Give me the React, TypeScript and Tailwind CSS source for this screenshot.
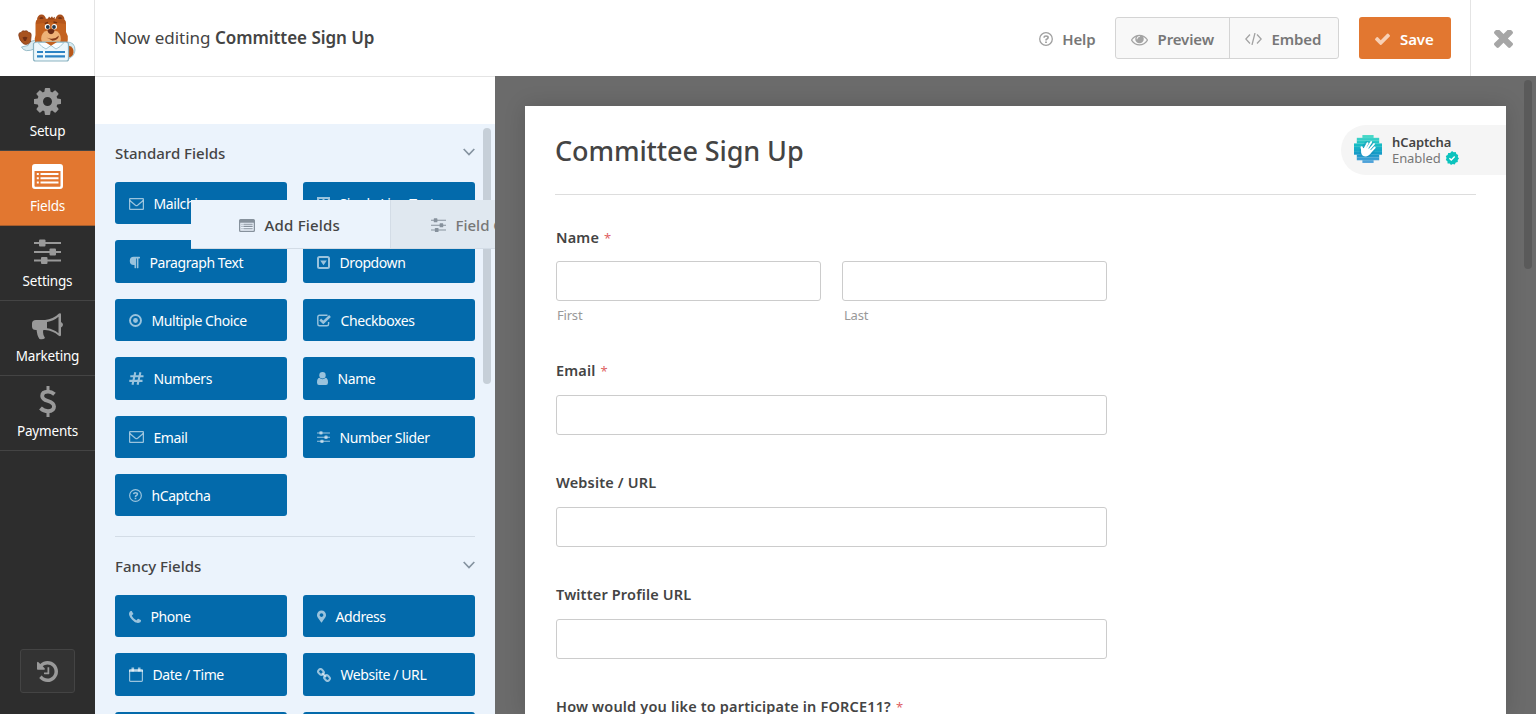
import React from "react";
import { FaParagraph, FaMapMarkerAlt } from "react-icons/fa";

const P = {
  history:
    "M1536 896q0 156-61 298t-164 245-245 164-298 61q-172 0-327-72.5t-264-204.5q-7-10-6.5-22.5t8.5-20.5l137-138q10-9 25-9 16 2 23 12 73 95 179 147t225 52q104 0 198.5-40.5t163.5-109.5 109.5-163.5 40.5-198.5-40.5-198.5-109.5-163.5-163.5-109.5-198.5-40.5q-98 0-188 35.5t-160 101.5l137 138q31 30 14 69-17 40-59 40h-448q-26 0-45-19t-19-45v-448q0-42 40-59 39-17 69 14l130 129q107-101 244.5-156.5t284.5-55.5q156 0 298 61t245 164 164 245 61 298zm-640-288v448q0 14-9 23t-23 9h-320q-14 0-23-9t-9-23v-64q0-14 9-23t23-9h224v-352q0-14 9-23t23-9h64q14 0 23 9t9 23z",
  eye: "M1664 960q-152-236-381-353 61 104 61 225 0 185-131.5 316.5t-316.5 131.5-316.5-131.5-131.5-316.5q0-121 61-225-229 117-381 353 133 205 333.500 326.500t434.500 121.500 434.500-121.500 333.500-326.500zm-720-384q0-20-14-34t-34-14q-125 0-214.500 89.500t-89.500 214.500q0 20 14 34t34 14 34-14 14-34q0-86 61-147t147-61q20 0 34-14t14-34zm848 384q0 34-20 69-140 230-376.500 368.500t-499.500 138.500-499.500-139-376.500-368q-20-35-20-69t20-69q140-229 376.500-368t499.500-139 499.500 139 376.500 368q20 35 20 69z",
  times:
    "M1490 1322q0 40-28 68l-136 136q-28 28-68 28t-68-28l-294-294-294 294q-28 28-68 28t-68-28l-136-136q-28-28-28-68t28-68l294-294-294-294q-28-28-28-68t28-68l136-136q28-28 68-28t68 28l294 294 294-294q28-28 68-28t68 28l136 136q28 28 28 68t-28 68l-294 294 294 294q28 28 28 68z",
  check:
    "M1671 566q0 40-28 68l-724 724-136 136q-28 28-68 28t-68-28l-136-136-362-362q-28-28-28-68t28-68l136-136q28-28 68-28t68 28l294 295 656-657q28-28 68-28t68 28l136 136q28 28 28 68z",
  cog: "M1152 896q0-106-75-181t-181-75-181 75-75 181 75 181 181 75 181-75 75-181zm512-109v222q0 12-8 23t-20 13l-185 28q-19 54-39 91 35 50 107 138 10 12 10 25t-9 23q-27 37-99 108t-94 71q-12 0-26-9l-138-108q-44 23-91 38-16 136-29 186-7 28-36 28h-222q-14 0-24.5-8.5t-11.5-21.5l-28-184q-49-16-90-37l-141 107q-10 9-25 9-14 0-25-11-126-114-165-168-7-10-7-23 0-12 8-23 15-21 51-66.5t54-70.5q-27-50-41-99l-183-27q-13-2-21-12.5t-8-23.5v-222q0-12 8-23t19-13l186-28q14-46 39-92-40-57-107-138-10-12-10-24 0-10 9-23 26-36 98.5-107.5t94.5-71.5q13 0 26 10l138 107q44-23 91-38 16-136 29-186 7-28 36-28h222q14 0 24.5 8.5t11.5 21.5l28 184q49 16 90 37l142-107q9-9 24-9 13 0 25 10 129 119 165 170 7 8 7 22 0 12-8 23-15 21-51 66.5t-54 70.5q26 50 41 98l183 28q13 2 21 12.5t8 23.5z",
  phone:
    "M1600 1240q0 27-10 70.5t-21 68.5q-21 50-122 106-94 51-186 51-27 0-53-3.5t-57.5-12.5-47-14.5-55.5-20.5-49-18q-98-35-175-83-127-79-264-216t-216-264q-48-77-83-175-3-9-18-49t-20.5-55.5-14.5-47-12.5-57.5-3.5-53q0-92 51-186 56-101 106-122 25-11 68.5-21t70.5-10q14 0 21 3 18 6 53 76 11 19 30 54t35 63.5 31 53.5q3 4 17.5 25t21.5 35.5 7 28.5q0 20-28.5 50t-62 55-62 53-28.5 46q0 9 5 22.5t8.5 20.5 14 24 11.5 19q76 137 174 235t235 174q2 1 19 11.5t24 14 20.5 8.5 22.5 5q18 0 46-28.5t53-62 55-62 50-28.5q14 0 28.5 7t35.5 21.5 25 17.5q25 15 53.5 31t63.5 35 54 30q70 35 76 53 3 7 3 21z",
};

type IconProps = { className?: string };

const Glyph = ({ d, box, className }: { d: string; box: string; className?: string }) => (
  <svg viewBox={box} className={className} fill="currentColor">
    <path d={d} />
  </svg>
);

const Envelope = ({ className = "w-[15px] h-3" }: IconProps) => (
  <svg viewBox="0 0 15 12" className={className} fill="none" stroke="currentColor" strokeWidth="1.3">
    <rect x=".6" y=".6" width="13.8" height="10.8" rx=".9" />
    <path d="M.8 2.6 6.4 7.2q1.1.8 2.2 0L14.2 2.6" />
  </svg>
);

const Question = ({ className = "w-[13px] h-[13px]" }: IconProps) => (
  <svg viewBox="0 0 14 14" className={className} fill="none" stroke="currentColor">
    <circle cx="7" cy="7" r="6.3" strokeWidth="1.3" />
    <path d="M4.900 5.600Q5.200 4 7 4 9.100 4 9.100 5.500 9.100 6.500 7.900 7.100 7 7.500 7 8.500" strokeWidth="1.700" />
    <path d="M7 9.400V11" strokeWidth="1.800" />
  </svg>
);

const Sliders = ({ className = "w-[13px] h-3" }: IconProps) => (
  <svg viewBox="0 0 27 25" className={className} fill="currentColor">
    <path d="M0 3h27v2H0zM0 12h27v2H0zM0 20.500h27v2H0z" />
    <rect x="5" y=".5" width="6.500" height="7" rx="1" />
    <rect x="15.500" y="9.500" width="6.500" height="7" rx="1" />
    <rect x="7" y="18" width="6.500" height="7" rx="1" />
  </svg>
);

const ListAlt = ({ className }: IconProps) => (
  <svg viewBox="0 0 31 25" className={className} fill="currentColor">
    <path
      fillRule="evenodd"
      d="M3 0h25a3 3 0 0 1 3 3v19a3 3 0 0 1-3 3H3a3 3 0 0 1-3-3V3a3 3 0 0 1 3-3zM2.500 7v15q0 .8.8.8h24.400q.8 0 .8-.8V7z"
    />
    <path d="M4.800 9h2v2h-2zM8.500 9h18v2h-18zM4.800 13.200h2v2h-2zM8.500 13.200h18v2h-18zM4.800 17.600h2v2h-2zM8.500 17.600h18v2h-18z" />
  </svg>
);

const Bullhorn = ({ className }: IconProps) => (
  <svg viewBox="0 0 31 27" className={className} fill="currentColor">
    <path d="M4 7h10v10H4q-4 0-4-3.500V10.500Q0 7 4 7zM4.500 16h7l-.5 3q0 3 2 6-2 2-5.500 1Q5 23 4.500 16z" />
    <path
      fillRule="evenodd"
      d="M13 7Q21 6.500 27 .6q2-1 2 1V9q2 1 2 2.800T29 14.500V22q-.4 2.200-2.500.6Q21 17.500 13 17zM15 9v6.200q6.500.8 11.500 5V3.800Q21.500 8 15 9z"
    />
  </svg>
);

const Dollar = ({ className }: IconProps) => (
  <svg viewBox="0 0 18 31" className={className} fill="none" stroke="currentColor">
    <path d="M9 0v5M9 26v5" strokeWidth="3" />
    <path
      d="M15.500 8.200Q12.500 5.600 9 5.600 3.200 5.600 3.200 10 3.200 13.300 9 15q6 1.900 6 5.500 0 4.700-6 4.700-4.300 0-7.500-3.200"
      strokeWidth="3.900"
    />
  </svg>
);

const Dropdown = () => (
  <svg viewBox="0 0 13 13" className="w-[13px] h-[13px]" fill="none" stroke="currentColor">
    <rect x="1" y="1" width="11" height="11" rx="1.500" strokeWidth="2" />
    <path d="M3.200 4.600h6.600L6.500 9.200z" fill="currentColor" stroke="none" />
  </svg>
);

const TextInput = () => (
  <svg viewBox="0 0 13 13" className="w-[13px] h-[13px]" fill="currentColor">
    <path d="M0 0h13v3.500h-1.500L10.500 2H7.500v9l2 1v1h-6v-1l2-1V2h-3L1.500 3.500H0z" />
  </svg>
);

const Radio = () => (
  <svg viewBox="0 0 13 13" className="w-[13px] h-[13px]" fill="none" stroke="currentColor">
    <circle cx="6.500" cy="6.500" r="5.500" strokeWidth="1.900" />
    <circle cx="6.500" cy="6.500" r="2.400" fill="currentColor" stroke="none" />
  </svg>
);

const CheckBox = () => (
  <svg viewBox="0 0 14 13" className="w-3.5 h-[13px]" fill="none" stroke="currentColor">
    <path d="M10.500 1.200H2.500Q.8 1.200.8 3v7q0 1.800 1.700 1.800h7.400q1.700 0 1.700-1.800V8" strokeWidth="1.400" />
    <path d="M3.200 5.500 6.300 8.500 13 2" strokeWidth="2.600" />
  </svg>
);

const Hash = () => (
  <svg viewBox="0 0 15 13" className="w-[15px] h-[13px]" fill="none" stroke="currentColor" strokeWidth="2.100">
    <path d="M1.300 4.200H14.500M.3 8.900H13.500M6.300.3 3.500 12.700M11.400.3 8.600 12.700" />
  </svg>
);

const User = () => (
  <svg viewBox="0 0 11 13" className="w-[11px] h-[13px]" fill="currentColor">
    <circle cx="5.500" cy="3.300" r="3.200" />
    <path d="M2.300 5.800Q5.500 8.700 8.700 5.800 11 6.300 11 10.500 11 13 9 13H2Q0 13 0 10.500 0 6.300 2.300 5.800z" />
  </svg>
);

const Calendar = () => (
  <svg viewBox="0 0 14 15" className="w-3.5 h-[15px]" fill="none" stroke="currentColor">
    <rect x=".6" y="2.800" width="12.800" height="11.500" rx=".8" strokeWidth="1.200" />
    <path d="M0 3.800h14" strokeWidth="2.200" />
    <path d="M3.800.4v4M10.200.4v4" strokeWidth="2.600" />
  </svg>
);

const Chain = () => (
  <svg viewBox="0 0 14 14" className="w-3.5 h-3.5" fill="none" stroke="currentColor" strokeWidth="2">
    <rect x="1" y="1.700" width="6" height="4.600" rx="2.200" transform="rotate(45 4 4)" />
    <rect x="7" y="7.700" width="6" height="4.600" rx="2.200" transform="rotate(45 10 10)" />
    <path d="M4.800 4.800 9.200 9.200" strokeWidth="1.700" />
  </svg>
);

const Chevron = () => (
  <svg viewBox="0 0 12 8" className="mb-0.5 w-3 h-2 text-[#8593a0]" fill="none" stroke="currentColor" strokeWidth="1.700">
    <path d="M.7 1 6 6.500 11.300 1" />
  </svg>
);

const Bear = () => (
  <svg viewBox="0 0 58 48" className="w-[58px] h-12">
    <circle cx="23.500" cy="5" r="4.400" fill="#a9501d" />
    <circle cx="42" cy="5" r="4.400" fill="#a9501d" />
    <circle cx="23.500" cy="5" r="1.900" fill="#713015" />
    <circle cx="42" cy="5" r="1.900" fill="#713015" />
    <path d="M3.500 33q3 6.500 14 1.500l.5-8q-7 0-8 5z" fill="#d9ebf1" stroke="#8fb6c3" strokeWidth=".9" />
    <path d="M.7 21q0-3 2.500-2.500Q4 16 6.500 17q3-1 4 1.300 3 .2 2.700 3L12.500 28q-3.500 4-7.500 1.500Q1 26 .7 21z" fill="#a8531f" stroke="#7c3716" strokeWidth=".7" />
    <path d="M4.500 23.500q2.500-1.500 5 0L7.800 27H6.200z" fill="#6f3015" />
    <path d="M49 28q8 0 8 8-.5 6-6 8.500h-3z" fill="#d7eaf0" stroke="#8fb6c3" strokeWidth=".8" />
    <path d="M50.500 31.500q5.500 1.500 5 7-.8 4.700-5 5z" fill="#b85719" />
    <path d="M17.500 9.500q0-4 4-4.500 11-1 22.500 0 4 .5 4 4.500V18q2.200 3 1.800 8l-1.300 5H17.500l-.8-6 .8-4z" fill="#c4621f" />
    <path d="M18 8q0-3 4-3h21.500q4 0 4 3v2Q33 7 18 10z" fill="#b5561b" />
    <path d="M29.500 5.500 31 2.500l1.500 1.500L34 2.300l1 1.700 2-1.200-.5 2.700z" fill="#9c481a" />
    <path d="M23.500 22q1.500-6 9.500-6t9.500 6q1.500 6.500-3 8.500H27q-5-2.500-3.500-8.500z" fill="#eeb277" />
    <circle cx="29.500" cy="12.800" r="2.700" fill="#fff" />
    <circle cx="36.300" cy="12.800" r="2.700" fill="#fff" />
    <circle cx="29.800" cy="13" r="1.900" fill="#26384a" />
    <circle cx="36" cy="13" r="1.900" fill="#26384a" />
    <path d="M26.800 9.600l3.200-1.300M35.500 8l3.500.8" stroke="#6d2f13" strokeWidth="1.300" />
    <path d="M29.500 16q3.500-1.800 7 0 0 3.500-3.500 4.300Q29.500 19.500 29.500 16z" fill="#6b2c16" />
    <path d="M28.500 23.500q7 3.500 12.500-2-1 5-6.500 5.300z" fill="#843918" />
    <path d="M15.500 29.500q1-1.500 3.500-1.500h29q2.500 0 2.500 2.500V45q0 2-2 2h-31q-2 0-2-2z" fill="#ecf7fb" stroke="#8bb3c2" strokeWidth="1.200" />
    <path d="M20 28.500h26q-4 5-8 6.500L33 31.500 28 35q-4-1.500-8-6.500z" fill="#f8fdff" stroke="#9cc3d0" strokeWidth=".9" />
    <path d="M27 28h12l-6 3.800z" fill="#c4621f" />
    <path d="M19 38h6M19 42.300h6M27 38h20M27 42.300h20" stroke="#2b83c4" strokeWidth="2.200" />
  </svg>
);

const captchaRows: [number, number][] = [[3, 4], [1, 8], [1, 8], [0, 10], [0, 10], [0, 10], [0, 10], [1, 8], [1, 8], [3, 4]];

const CaptchaLogo = () => (
  <svg viewBox="0 0 28 28" className="-mt-0.5 w-7 h-7 shrink-0">
    <defs>
      <linearGradient id="captcha" x1="0" y1="0" x2="0" y2="28" gradientUnits="userSpaceOnUse">
        <stop offset="0" stopColor="#4fdcc8" />
        <stop offset=".35" stopColor="#17bcc4" />
        <stop offset=".7" stopColor="#1697c8" />
        <stop offset="1" stopColor="#5aa5dc" />
      </linearGradient>
    </defs>
    <g fill="url(#captcha)">
      {captchaRows.map(([x, w], y) => (
        <rect key={y} x={x * 2.8} y={y * 2.8} width={w * 2.8} height="2.900" />
      ))}
    </g>
    <path d="M5.600 19.600V14L12 6l8.400 1.500V17l-6 5z" fill="#0b86b4" opacity=".35" />
    <path d="M8.800 17 7.700 12.500" stroke="#fff" strokeWidth="2.400" strokeLinecap="round" />
    <path d="M10.500 14 13.500 8.200M12.500 14.500 17.200 7M14.500 15.500 20 9M16 17.500 20.700 12.500" stroke="#fff" strokeWidth="1.900" strokeLinecap="round" />
    <path d="M7.200 14.500 10 12.800 13 12.500 17.800 15.800Q16.500 20.500 12 21.500 8 21.500 7.200 18z" fill="#fff" />
  </svg>
);

const Verified = () => (
  <svg viewBox="0 0 14 14" className="w-3.5 h-3.5">
    <path
      d="M7 0 8.700 1.200 10.700 1 11.400 3 13.200 4 12.800 6 14 7.500 12.700 9 12.800 11 10.800 11.600 9.700 13.400 7.700 12.900 6 14 4.700 12.500 2.600 12.400 2.400 10.300.8 9 1.500 7 .8 5 2.600 4 3.200 2 5.200 1.900z"
      fill="#0bc3bd"
    />
    <path d="M4.400 7.200 6.300 9 9.700 5.400" fill="none" stroke="#fff" strokeWidth="1.400" />
  </svg>
);

const navItems = [
  { label: "Setup", icon: <Glyph d={P.cog} box="128 128 1536 1536" className="w-[27px] h-[27px]" /> },
  { label: "Fields", icon: <ListAlt className="w-[31px] h-[25px]" />, active: true },
  { label: "Settings", icon: <Sliders className="w-[27px] h-[25px]" /> },
  { label: "Marketing", icon: <Bullhorn className="w-[31px] h-[27px]" /> },
  { label: "Payments", icon: <Dollar className="w-[18px] h-[31px]" /> },
];

type Field = { label: string; icon?: React.ReactNode };

const standardFields: Field[] = [
  { label: "Mailchimp", icon: <Envelope /> },
  { label: "Single Line Text", icon: <TextInput /> },
  { label: "Paragraph Text", icon: <FaParagraph className="w-[11px] h-[13px]" preserveAspectRatio="none" /> },
  { label: "Dropdown", icon: <Dropdown /> },
  { label: "Multiple Choice", icon: <Radio /> },
  { label: "Checkboxes", icon: <CheckBox /> },
  { label: "Numbers", icon: <Hash /> },
  { label: "Name", icon: <User /> },
  { label: "Email", icon: <Envelope /> },
  { label: "Number Slider", icon: <Sliders /> },
  { label: "hCaptcha", icon: <Question /> },
];

const fancyFields: Field[] = [
  { label: "Phone", icon: <Glyph d={P.phone} box="192 128 1408 1408" className="w-3 h-3" /> },
  { label: "Address", icon: <FaMapMarkerAlt className="w-[9px] h-[13px]" /> },
  { label: "Date / Time", icon: <Calendar /> },
  { label: "Website / URL", icon: <Chain /> },
  { label: "" },
  { label: "" },
];

const FieldGrid = ({ fields }: { fields: Field[] }) => (
  <div className="grid grid-cols-2 gap-4">
    {fields.map((f, i) => (
      <button
        key={i}
        className="flex h-[42.400px] items-center gap-[10px] rounded-[3px] bg-[#036aab] pt-px pl-[13.500px] text-left text-[14px] tracking-[-0.42px] text-white"
      >
        <span className="flex shrink-0 text-white/60">{f.icon}</span>
        {f.label}
      </button>
    ))}
  </div>
);

const GroupTitle = ({ children }: { children: React.ReactNode }) => (
  <div className="flex items-center justify-between text-[15px] leading-5 font-medium text-[#444]">
    <span>{children}</span>
    <Chevron />
  </div>
);

const Label = ({ children, required }: { children: React.ReactNode; required?: boolean }) => (
  <div className="h-5 text-[14.500px] leading-5 font-semibold tracking-[0.17px] text-[#444]">
    {children}
    {required && <span className="pl-[5px] text-[13px] font-normal text-[#d63638]/80">*</span>}
  </div>
);

const Input = () => <div className="h-10 rounded-[3px] border border-[#ccc] bg-white" />;

export default function App() {
  return (
    <div className="flex h-[714px] w-[1536px] flex-col overflow-hidden bg-white font-['Noto_Sans',sans-serif]">
      <header className="relative z-10 flex h-[76px] shrink-0 bg-white">
        <div className="flex w-[95px] justify-center border-r border-[#e4e4e4] pt-3.5">
          <Bear />
        </div>
        <div className="flex flex-1 items-center justify-between pr-[19.500px] pl-[19px]">
          <div className="text-[17px] text-[#444]">
            Now editing <span className="font-semibold tracking-[-0.05px]">Committee Sign Up</span>
          </div>
          <div className="flex items-center text-[15px] font-semibold tracking-[-0.1px] text-[#777]">
            <div className="mr-[19px] flex items-center gap-[9px] pt-0.5">
              <Question className="h-3.5 w-3.5 text-[#a0a0a0]" />
              Help
            </div>
            <div className="flex h-[42px] rounded-[3px] border border-[#d4d4d4] bg-[#f8f8f8]">
              <div className="flex w-[114px] items-center gap-2.5 border-r border-[#d4d4d4] pt-0.5 pl-[15px]">
                <Glyph d={P.eye} box="0 0 1792 1792" className="h-[17px] w-[17px] text-[#a3a3a3]" />
                Preview
              </div>
              <div className="flex w-[108px] items-center gap-2.5 pt-0.5 pl-[15px]">
                <svg viewBox="0 0 17 12" className="h-3 w-[17px] text-[#a3a3a3]" fill="none" stroke="currentColor" strokeWidth="1.300">
                  <path d="M5 1.500.8 6 5 10.500M12 1.500 16.200 6 12 10.500M10 0 7 12" />
                </svg>
                Embed
              </div>
            </div>
            <div className="ml-5 flex h-[42px] w-[92px] items-center gap-2.5 rounded-[3px] bg-[#e27730] pt-0.5 pl-[16.500px] text-white">
              <Glyph d={P.check} box="121 300 1550 1300" className="h-[13px] w-[15px] text-[#f8d0b5]" />
              Save
            </div>
          </div>
        </div>
        <div className="flex w-[66px] items-center justify-center border-l border-[#e4e4e4] pt-0.5">
          <Glyph d={P.times} box="302 434 1188 1188" className="h-[19px] w-[19px] text-[#a6a6a6]" />
        </div>
      </header>

      <div className="flex min-h-0 flex-1">
        <nav className="flex w-[95px] shrink-0 flex-col bg-[#2d2d2d]">
          {navItems.map((n) => (
            <div
              key={n.label}
              className={`flex h-[75px] flex-col items-center border-b text-[13.500px] tracking-[-0.2px] ${
                n.active ? "border-[#a65d2d] bg-[#e27730]" : "border-[#444]"
              }`}
            >
              <span className={`flex h-[51px] items-center ${n.active ? "text-white" : "text-[#999]"}`}>{n.icon}</span>
              <span className="-mt-1.5 leading-5 text-white">{n.label}</span>
            </div>
          ))}
          <div className="mx-auto mt-auto mb-[21px] flex h-11 w-[55px] items-center justify-center rounded-[3px] border border-[#444] bg-[#333] text-[#999]">
            <Glyph d={P.history} box="0 128 1536 1536" className="h-[21px] w-[21px]" />
          </div>
        </nav>

        <aside className="relative flex w-[400px] shrink-0 flex-col overflow-hidden bg-[#ebf3fc]">
          <div className="h-12 shrink-0 border-t border-[#e4e4e4] bg-white" />
          <div className="flex flex-col px-5 pt-[19px]">
            <GroupTitle>Standard Fields</GroupTitle>
            <div className="mt-[19px] border-b border-[#d3dce6] pb-5">
              <FieldGrid fields={standardFields} />
            </div>
            <div className="mt-[19px] mb-[18.500px]">
              <GroupTitle>Fancy Fields</GroupTitle>
            </div>
            <FieldGrid fields={fancyFields} />
          </div>
          <div className="absolute top-[52px] right-1 h-64 w-2 rounded-full bg-[#c6cfd8]" />
          <div className="absolute top-[124px] left-[95.500px] flex h-[49px] w-[400px] border-b border-[#d3dce6] text-[15px] font-medium">
            <div className="flex w-[200px] items-center gap-2.5 border-r border-[#d3dce6] bg-[#ebf3fc] pt-0.5 pl-12 tracking-[0.2px] text-[#444]">
              <ListAlt className="h-[13px] w-4 text-[#86919c]" />
              Add Fields
            </div>
            <div className="flex w-[200px] items-center gap-2.5 bg-[#e0e8f0] pt-0.5 pl-10 whitespace-nowrap text-[#777]">
              <Sliders className="h-[14px] w-[15px] text-[#86919c]" />
              Field Options
            </div>
          </div>
        </aside>

        <main className="relative flex flex-1 bg-[#6b6b6b] pt-[30px] pl-[30px]">
          <section className="w-[981px] bg-white pl-[30px] shadow-[0_0_20px_rgba(0,0,0,0.15)]">
            <div className="flex h-[89px] justify-between">
              <h1 className="mr-[30px] flex-1 border-b border-[#ddd] pt-[27px] text-[27px] leading-9 font-medium tracking-[-0.1px] text-[#444]">
                Committee Sign Up
              </h1>
              <div className="absolute top-[49px] left-[846px] flex h-[50px] w-[165px] items-center gap-2.5 rounded-l-full bg-[#f5f5f5] pl-[13px]">
                <CaptchaLogo />
                <div className="text-[13px] leading-4 tracking-[-0.1px]">
                  <div className="font-semibold text-[#444]">hCaptcha</div>
                  <div className="flex items-center gap-1 text-[#777]">
                    Enabled <Verified />
                  </div>
                </div>
              </div>
            </div>
            <div className="flex w-[552px] flex-col pt-8 pl-px">
              <Label required>Name</Label>
              <div className="mt-3.5 grid grid-cols-2 gap-[21px] text-[13px] leading-5 tracking-[-0.2px] text-[#999]">
                <div>
                  <Input />
                  <div className="pt-1 pl-px">First</div>
                </div>
                <div>
                  <Input />
                  <div className="pt-1 pl-0.5">Last</div>
                </div>
              </div>
              <div className="mt-[35px] flex flex-col gap-[15px]">
                <Label required>Email</Label>
                <Input />
              </div>
              <div className="mt-[37px] flex flex-col gap-[15px]">
                <Label>Website / URL</Label>
                <Input />
              </div>
              <div className="mt-[37px] flex flex-col gap-[15px]">
                <Label>Twitter Profile URL</Label>
                <Input />
              </div>
              <div className="mt-[37px]">
                <Label required>How would you like to participate in FORCE11?</Label>
              </div>
            </div>
          </section>
          <div className="absolute top-1 right-1 h-[189px] w-2 rounded-full bg-[#5a5a5a]" />
        </main>
      </div>
    </div>
  );
}
